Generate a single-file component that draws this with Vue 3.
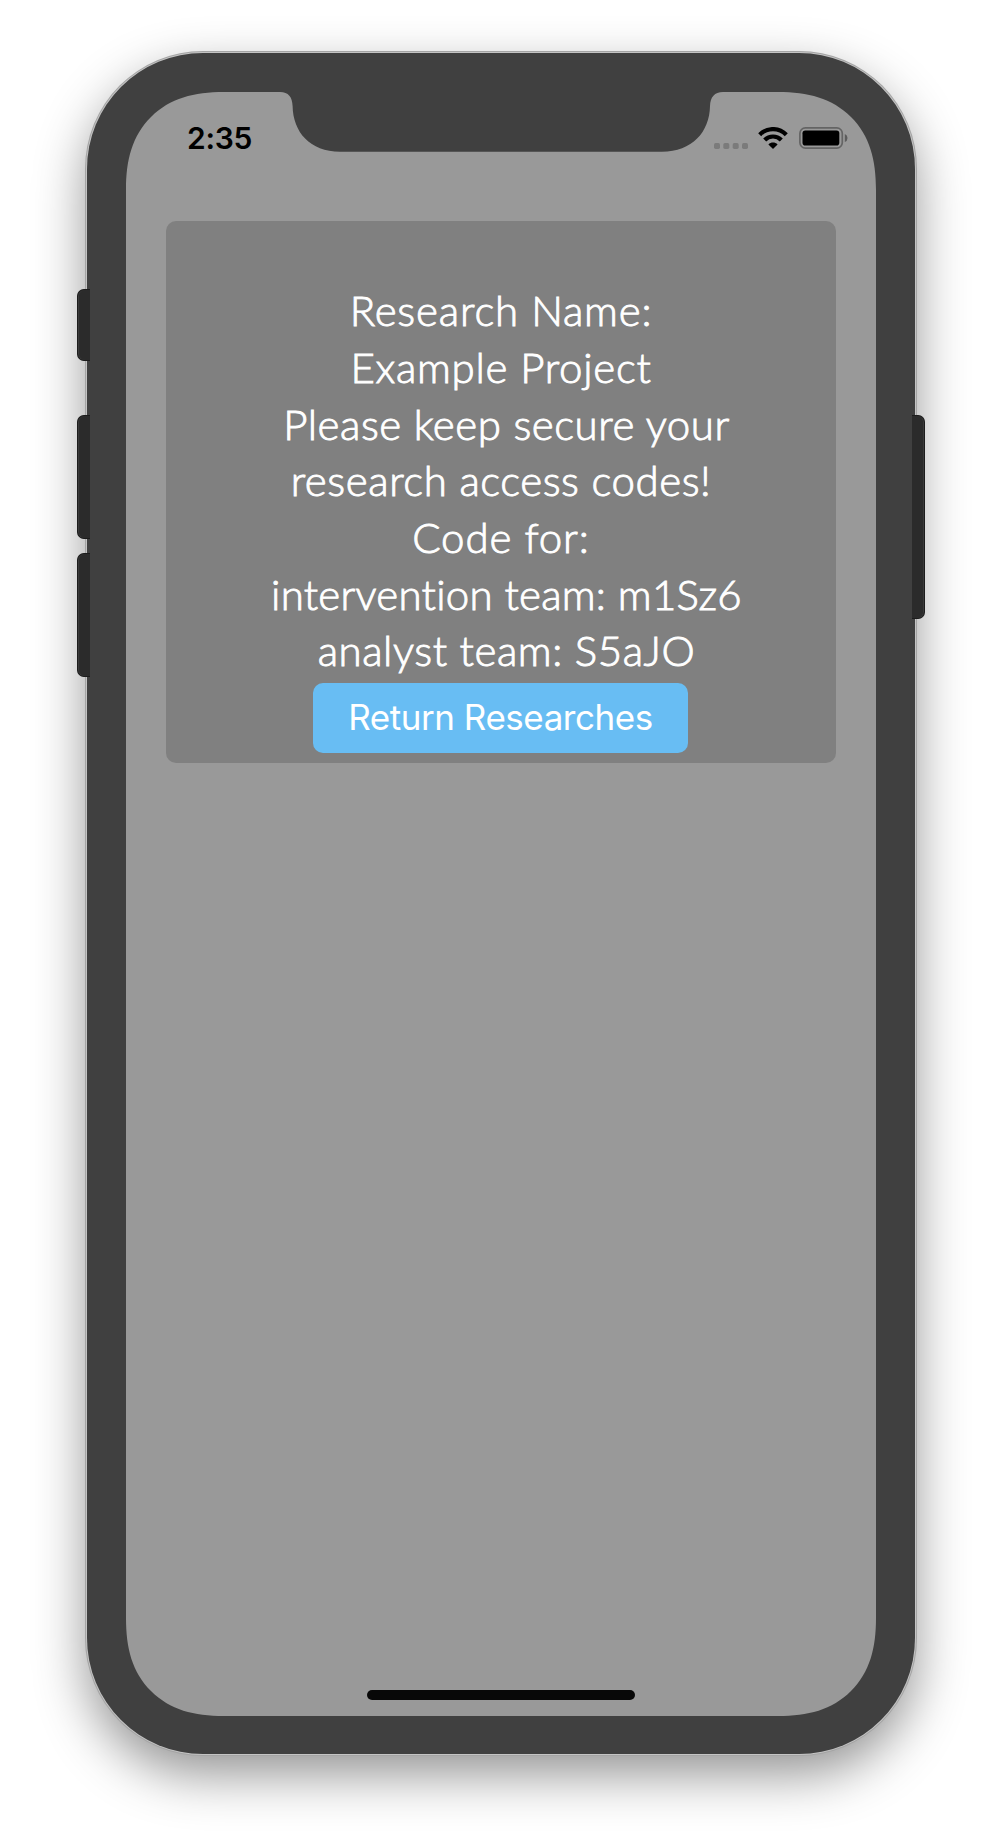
<script setup>
const lines = [
  { text: 'Research Name:', spacing: 0.82 },
  { text: 'Example Project', spacing: 0.72 },
  { text: 'Please keep secure your', spacing: 0.54, indent: true },
  { text: 'research access codes!', spacing: 0.57 },
  { text: 'Code for:', spacing: 0.86 },
  { text: 'intervention team: m1Sz6', spacing: 0.25, indent: true },
  { text: 'analyst team: S5aJO', spacing: 0.55, indent: true },
]
const sideButtons = ['mute', 'volume-up', 'volume-down', 'power']
</script>

<template>
  <div class="stage">
    <div class="phone">
      <span v-for="name in sideButtons" :key="name" class="side" :class="name"></span>
      <div class="screen">
        <svg class="glass" viewBox="0 0 750 1624" aria-hidden="true">
          <path
            d="M98 0H154C162.500 0 166.200 5 166.600 14C167 40 184 59.700 214 59.700H536C566 59.700 583.600 40 584 14C584.400 5 588.500 0 597 0H652C682 0 706 6 725 25C744 44 750 68 750 98V1526C750 1556 744 1580 725 1599C706 1618 682 1624 652 1624H98C68 1624 44 1618 25 1599C6 1580 0 1556 0 1526V98C0 68 6 44 25 25C44 6 68 0 98 0Z"
            fill="#999"
          />
        </svg>
        <header class="status">
          <span class="time">2:35</span>
          <div class="indicators">
            <svg class="signal" width="35" height="6" viewBox="0 0 35 6">
              <g fill="#7b7b7b">
                <rect width="6" height="6" rx="1.700" />
                <rect x="9.300" width="6" height="6" rx="1.700" />
                <rect x="18.700" width="6" height="6" rx="1.700" />
                <rect x="28" width="6" height="6" rx="1.700" />
              </g>
            </svg>
            <svg class="wifi" width="30" height="22" viewBox="0 0 30 22">
              <path d="M1.700 7.700C9 0.200 21 0.200 28.300 7.700" fill="none" stroke="#000" stroke-width="4.200" />
              <path d="M6.700 13C11.300 8.300 18.700 8.300 23.300 13" fill="none" stroke="#000" stroke-width="4.200" />
              <path d="M10.400 17.400C13 15 17 15 19.600 17.400L15.500 21.600Q15 22 14.500 21.600Z" />
            </svg>
            <svg class="battery" width="49" height="22" viewBox="0 0 49 22">
              <rect x="0.900" y="0.900" width="42.400" height="20.200" rx="5.500" fill="none" stroke="#646464" stroke-width="1.700" />
              <rect x="3.500" y="3.500" width="36.800" height="15" rx="2.800" />
              <path d="M45.800 7Q48.500 8 48.500 11T45.800 15Z" fill="#5c5c5c" />
            </svg>
          </div>
        </header>
        <main class="card">
          <p
            v-for="line in lines"
            :key="line.text"
            class="line"
            :class="{ indent: line.indent }"
            :style="{ letterSpacing: line.spacing + 'px' }"
          >{{ line.text }}</p>
          <button class="return" type="button">Return Researches</button>
        </main>
        <div class="home"></div>
      </div>
    </div>
  </div>
</template>

<style>
body {
  background: #fff;
}
</style>

<style scoped>
.stage {
  box-sizing: border-box;
  width: 1002px;
  height: 1840px;
  padding: 53px 87px 0;
  overflow: hidden;
  background: #fff;
}
.phone {
  position: relative;
  box-sizing: border-box;
  width: 828px;
  height: 1701px;
  padding: 39px;
  border-radius: 116px;
  background: #404040;
  box-shadow: 0 0 0 1px #c4c4c4, 0 0 0 2px #a4a4a4, 0 20px 52px rgba(0, 0, 0, 0.43);
}
.side {
  position: absolute;
  box-sizing: border-box;
  left: -10px;
  width: 13px;
  border: 1px solid #1c1c1c;
  border-right: 0;
  border-radius: 7px 0 0 7px;
  background: #2b2b2b;
  box-shadow: inset 1px 0 0 #3a3a3a;
}
.mute {
  top: 236px;
  height: 72px;
}
.volume-up {
  top: 362px;
  height: 124px;
}
.volume-down {
  top: 500px;
  height: 124px;
}
.power {
  top: 362px;
  left: 825px;
  height: 204px;
  transform: scaleX(-1);
}
.screen {
  position: relative;
  display: flex;
  flex-direction: column;
  align-items: center;
  width: 750px;
  height: 1624px;
}
.glass {
  position: absolute;
  inset: 0;
  width: 750px;
  height: 1624px;
}
.status {
  position: relative;
  display: flex;
  justify-content: space-between;
  box-sizing: border-box;
  width: 100%;
  height: 129px;
  padding: 28px 28px 0 61px;
}
.time {
  font: 600 30px/36px Inter, sans-serif;
  letter-spacing: -0.300px;
  color: #000;
}
.indicators {
  display: flex;
  height: 22px;
  margin-top: 7px;
}
.signal {
  align-self: flex-end;
  margin-right: 9px;
}
.wifi {
  margin-right: 11px;
}
.card {
  position: relative;
  display: flex;
  flex-direction: column;
  align-items: center;
  box-sizing: border-box;
  width: 670px;
  height: 542px;
  padding-top: 61.300px;
  border-radius: 10px;
  background: #808080;
}
.line {
  margin: 0;
  font: 300 42px/56.650px Lato, sans-serif;
  color: #fff;
  white-space: nowrap;
  -webkit-text-stroke: 0.900px #fff;
}
.indent {
  padding-left: 11px;
}
.return {
  flex: none;
  width: 375px;
  height: 70px;
  margin: 3.700px 1px 0 0;
  padding: 0 0 2px;
  border: 0;
  border-radius: 10px;
  background: #68bdf3;
  font: 400 35px/68px Inter, sans-serif;
  letter-spacing: -0.460px;
  color: #fff;
}
.home {
  position: relative;
  width: 268px;
  height: 10px;
  margin-top: auto;
  margin-bottom: 16px;
  border-radius: 5px;
  background: #080808;
}
</style>
